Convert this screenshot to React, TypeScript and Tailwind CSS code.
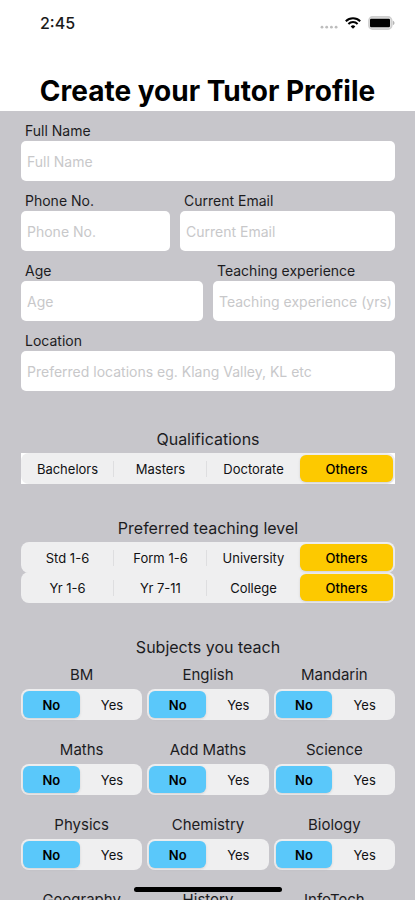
import { clsx } from "clsx";

type FieldProps = {
  id: string;
  label: string;
  placeholder?: string;
  type?: string;
};

function Field({ id, label, placeholder = label, type = "text" }: FieldProps) {
  return (
    <div className="min-w-0">
      <label htmlFor={id} className="block pl-1 text-sm leading-5 text-[#1c1c1f]">
        {label}
      </label>
      <input
        id={id}
        type={type}
        placeholder={placeholder}
        className="block h-10 w-full rounded-[5px] bg-white pr-1 pl-[6px] text-sm text-black outline-none placeholder:text-[#c8c8ca]"
      />
    </div>
  );
}

type SegmentedProps = {
  name: string;
  label: string;
  options: string[];
  selected: string;
  tone: "yellow" | "blue";
  square?: boolean;
};

function Segmented({ name, label, options, selected, tone, square }: SegmentedProps) {
  return (
    <div role="radiogroup" aria-label={label} className={clsx(square && "bg-white")}>
      <div
        className={clsx(
          "flex h-[31px] rounded-lg bg-[#efeff0] py-0.5 pr-0.5",
          tone === "blue" && "gap-1 pl-0.5",
        )}
      >
        {options.map((option, i) => (
          <label
            key={option}
            className={clsx(
              "relative flex flex-1 cursor-pointer items-center justify-center rounded-md text-[13px] leading-4 text-[#111113] has-checked:text-black has-checked:shadow-sm",
              tone === "yellow"
                ? "has-checked:bg-[#fdc900] has-checked:font-medium"
                : "has-checked:bg-[#5ac8fa] has-checked:font-semibold",
            )}
          >
            <input
              type="radio"
              name={name}
              value={option}
              defaultChecked={option === selected}
              className="sr-only"
            />
            {option}
            {i < options.length - 2 && (
              <span className="absolute right-0 h-4 w-px bg-[#dedee0]" />
            )}
          </label>
        ))}
      </div>
    </div>
  );
}

const subjects = [
  "BM",
  "English",
  "Mandarin",
  "Maths",
  "Add Maths",
  "Science",
  "Physics",
  "Chemistry",
  "Biology",
  "Geography",
  "History",
  "InfoTech",
];

function StatusBar() {
  return (
    <div className="flex h-[46px] items-center justify-between pr-5 pl-10">
      <time className="text-base font-medium text-[#1a1a1a]">2:45</time>
      <div className="flex items-center gap-[7px]">
        <svg width="18" height="12" viewBox="0 0 18 12" fill="#bdbdbd" aria-hidden="true">
          <circle cx="2" cy="10.2" r="1.4" />
          <circle cx="6.7" cy="10.2" r="1.4" />
          <circle cx="11.4" cy="10.2" r="1.4" />
          <circle cx="16.1" cy="10.2" r="1.4" />
        </svg>
        <svg width="16" height="12" viewBox="0 0 16 12" fill="none" stroke="#000" strokeWidth="2" aria-hidden="true">
          <path d="M0.8 4.2a10.2 10.2 0 0 1 14.4 0" />
          <path d="M3.4 7a6.5 6.5 0 0 1 9.2 0" />
          <path d="M8 11.8 5.7 9.4a3.3 3.3 0 0 1 4.6 0z" fill="#000" stroke="none" />
        </svg>
        <svg width="27" height="14" viewBox="0 0 27 14" aria-hidden="true">
          <rect x="0.9" y="0.9" width="22.8" height="12.2" rx="3.6" fill="#e4e4e4" stroke="#cfcfcf" strokeWidth="1.6" />
          <rect x="2" y="2.8" width="20" height="8.4" rx="1.2" fill="#000" />
          <path d="M24.8 4.8c1.2.4 1.7 1.2 1.7 2.2s-.5 1.8-1.7 2.2z" fill="#b5b5b5" />
        </svg>
      </div>
    </div>
  );
}

export default function App() {
  return (
    <div className="relative flex h-screen flex-col overflow-hidden bg-[#c7c6cb] font-['Inter','Liberation_Sans',sans-serif]">
      <header className="h-[111px] shrink-0 bg-white">
        <StatusBar />
        <h1 className="pt-[27px] text-center text-[28px] leading-9 font-bold text-black">
          Create your Tutor Profile
        </h1>
      </header>

      <main className="min-h-0 flex-1 overflow-y-auto px-5 [scrollbar-width:none]">
        <form className="pl-px">
          <div className="flex flex-col gap-[10px] pt-[10px]">
            <Field id="full-name" label="Full Name" />
            <div className="grid grid-cols-[149fr_215fr] gap-[10px]">
              <Field id="phone" label="Phone No." type="tel" />
              <Field id="email" label="Current Email" type="email" />
            </div>
            <div className="grid grid-cols-2 gap-[10px]">
              <Field id="age" label="Age" />
              <Field id="experience" label="Teaching experience" placeholder="Teaching experience (yrs)" />
            </div>
            <Field id="location" label="Location" placeholder="Preferred locations eg. Klang Valley, KL etc" />
          </div>

          <section className="pt-9">
            <h2 className="pb-0.5 text-center text-base leading-6 text-[#1c1c1f]">Qualifications</h2>
            <Segmented
              name="qualification"
              label="Qualifications"
              options={["Bachelors", "Masters", "Doctorate", "Others"]}
              selected="Others"
              tone="yellow"
              square
            />
          </section>

          <section className="pt-8">
            <h2 className="pb-0.5 text-center text-base leading-6 text-[#1c1c1f]">Preferred teaching level</h2>
            <div className="flex flex-col -space-y-px">
              <Segmented
                name="level-school"
                label="School level"
                options={["Std 1-6", "Form 1-6", "University", "Others"]}
                selected="Others"
                tone="yellow"
              />
              <Segmented
                name="level-year"
                label="Year level"
                options={["Yr 1-6", "Yr 7-11", "College", "Others"]}
                selected="Others"
                tone="yellow"
              />
            </div>
          </section>

          <section className="pt-8">
            <h2 className="text-center text-base leading-6 text-[#1c1c1f]">Subjects you teach</h2>
            <div className="grid grid-cols-3 gap-x-[5px] gap-y-5 pt-[6px] pb-10">
              {subjects.map((subject) => (
                <div key={subject}>
                  <h3 className="pb-1 text-center text-[15px] leading-5 text-[#1c1c1f]">{subject}</h3>
                  <Segmented
                    name={`subject-${subject}`}
                    label={subject}
                    options={["No", "Yes"]}
                    selected="No"
                    tone="blue"
                  />
                </div>
              ))}
            </div>
          </section>
        </form>
      </main>

      <div className="pointer-events-none absolute inset-x-0 bottom-2 flex justify-center">
        <div className="h-[5px] w-[148px] rounded-full bg-black" />
      </div>
    </div>
  );
}
